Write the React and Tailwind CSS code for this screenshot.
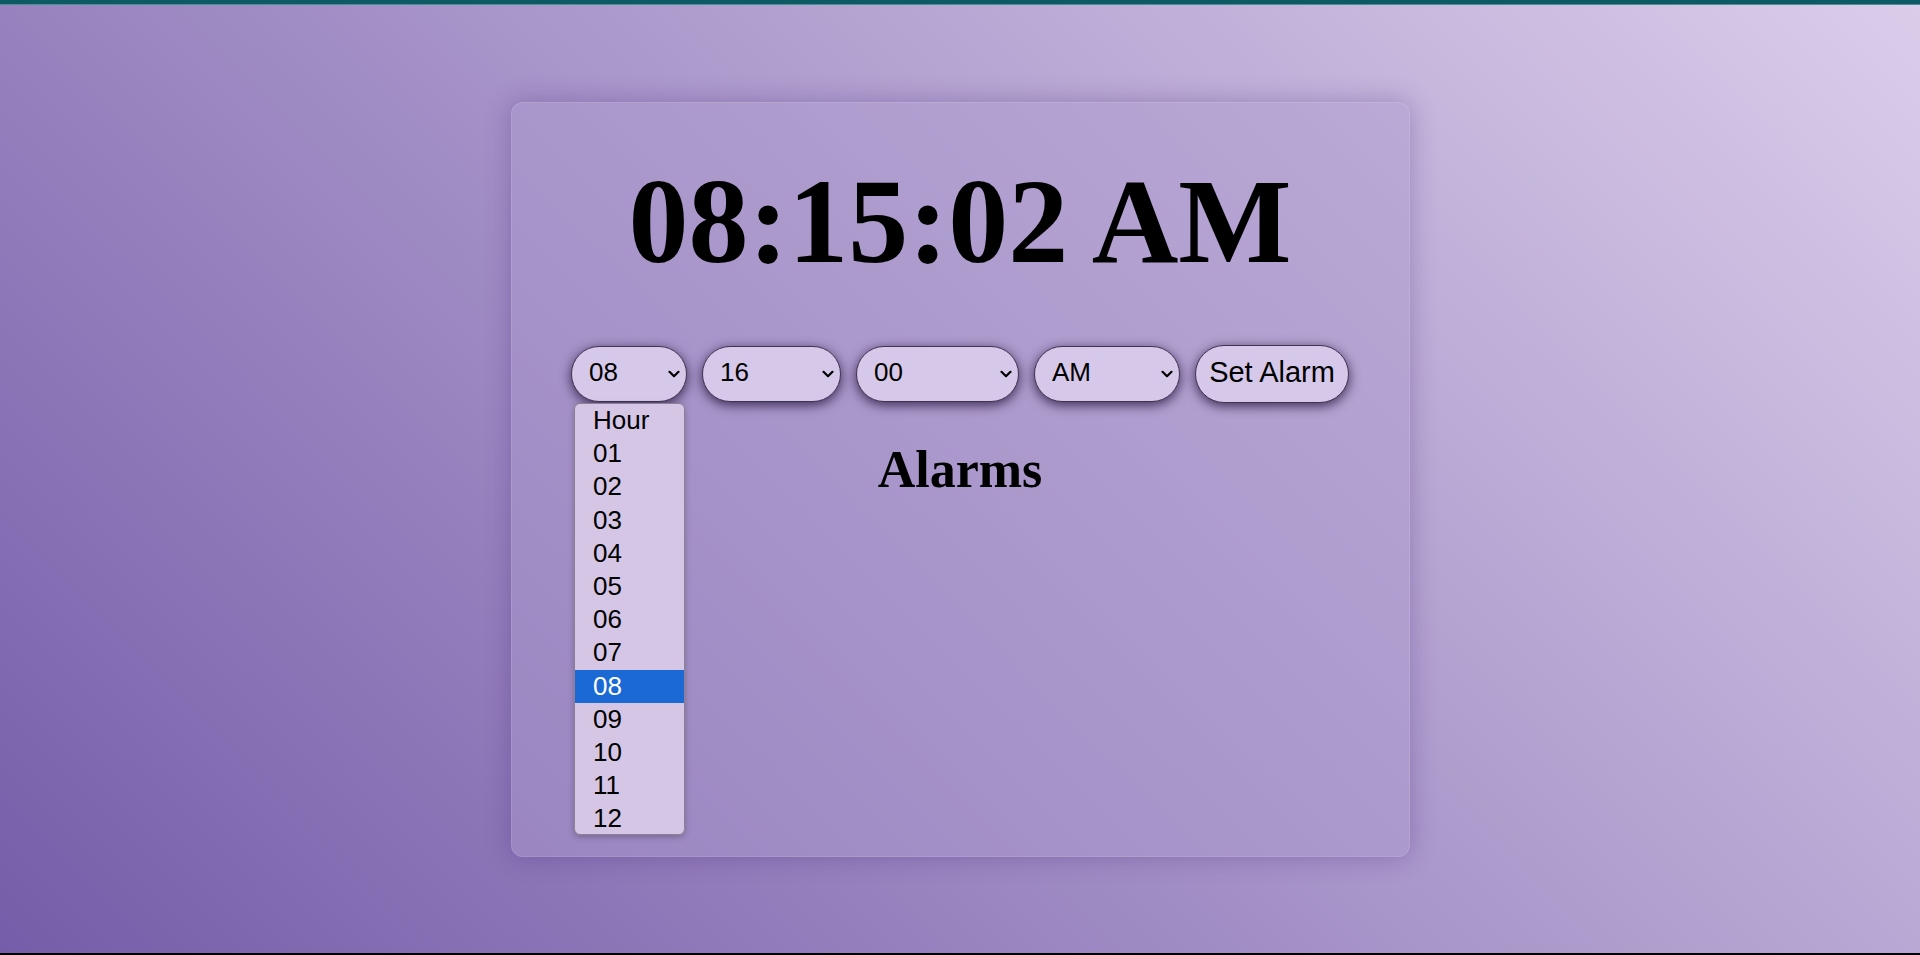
import { useState } from 'react'

const hours = ['Hour', '01', '02', '03', '04', '05', '06', '07', '08', '09', '10', '11', '12']
const minutes = ['Minute', ...Array.from({ length: 60 }, (_, i) => String(i).padStart(2, '0'))]
const seconds = ['Seconds', ...Array.from({ length: 60 }, (_, i) => String(i).padStart(2, '0'))]
const periods = ['AM/PM', 'AM', 'PM']

function Chevron() {
    return (
        <svg viewBox="0 0 12 8" className="w-[12px] h-[8px]" fill="none" stroke="black" strokeWidth="2.2" strokeLinecap="round" strokeLinejoin="round">
            <path d="M1.5 1.8 6 6.2l4.5-4.4" />
        </svg>
    )
}

function PillSelect({ value, options, width, onChange, children }) {
    return (
        <div className={`relative h-[56px] ${width}`}>
            <select
                value={value}
                onChange={(e) => onChange(e.target.value)}
                className="appearance-none w-full h-full rounded-full bg-[#d6c8e8] border border-[#3f3352] pl-[17px] pr-8 pb-[3px] text-[26px] text-black font-['Liberation_Sans',Arial,sans-serif] shadow-[0_3px_12px_rgba(20,5,40,0.75)] outline-none"
            >
                {options.map((o, i) => (
                    <option key={o} value={i === 0 ? '' : o}>{o}</option>
                ))}
            </select>
            <span className="pointer-events-none absolute right-[7px] top-1/2 -translate-y-1/2 flex">
                <Chevron />
            </span>
            {children}
        </div>
    )
}

function HourList({ selected }) {
    return (
        <ul className="absolute left-[3px] top-[57px] z-10 w-[111px] h-[432px] overflow-hidden rounded-[6px] border border-[#8b8196] bg-[#d5c6e6] shadow-[0_2px_6px_rgba(0,0,0,0.25)] font-['Liberation_Sans',Arial,sans-serif] text-[26px]">
            {hours.map((h) => (
                <li
                    key={h}
                    className={`h-[33.2px] leading-[33px] pl-[18px] ${h === selected ? 'bg-[#1a69d5] text-white' : 'text-black'}`}
                >
                    {h}
                </li>
            ))}
        </ul>
    )
}

export default function App() {
    const [hour, setHour] = useState('08')
    const [minute, setMinute] = useState('16')
    const [second, setSecond] = useState('00')
    const [period, setPeriod] = useState('AM')

    return (
        <div className="h-screen flex flex-col overflow-hidden">
            <div className="h-[4px] bg-[#0c5a64]" />
            <div className="h-[1px] bg-[#4a8f94]" />

            <main className="flex-1 flex justify-center pt-[97px] bg-[linear-gradient(45deg,#765da9,#dacdea)]">
                <section className="w-[899px] h-[755px] flex flex-col items-center pt-[59px] rounded-[12px] bg-[#ad9bcf]/45 border border-white/10 shadow-[0_0_26px_rgba(60,30,110,0.3)]">
                    <h1 className="text-[120px] leading-none font-bold text-black font-['Liberation_Serif','Times_New_Roman',serif]">
                        08:15:02 AM
                    </h1>

                    <div className="mt-[63px] flex items-center gap-[15px]">
                        <PillSelect value={hour} options={hours} width="w-[116px]" onChange={setHour}>
                            <HourList selected={hour} />
                        </PillSelect>
                        <PillSelect value={minute} options={minutes} width="w-[139px]" onChange={setMinute} />
                        <PillSelect value={second} options={seconds} width="w-[163px]" onChange={setSecond} />
                        <PillSelect value={period} options={periods} width="w-[146px]" onChange={setPeriod} />
                        <button className="h-[58px] w-[154px] rounded-full bg-[#d6c8e8] border border-[#3f3352] pb-[2px] text-[29px] text-black font-['Liberation_Sans',Arial,sans-serif] shadow-[0_3px_12px_rgba(20,5,40,0.75)]">
                            Set Alarm
                        </button>
                    </div>

                    <h2 className="mt-[41px] text-[52px] leading-none font-bold text-black font-['Liberation_Serif','Times_New_Roman',serif]">
                        Alarms
                    </h2>
                </section>
            </main>

            <div className="h-[2px] bg-black" />
        </div>
    )
}
